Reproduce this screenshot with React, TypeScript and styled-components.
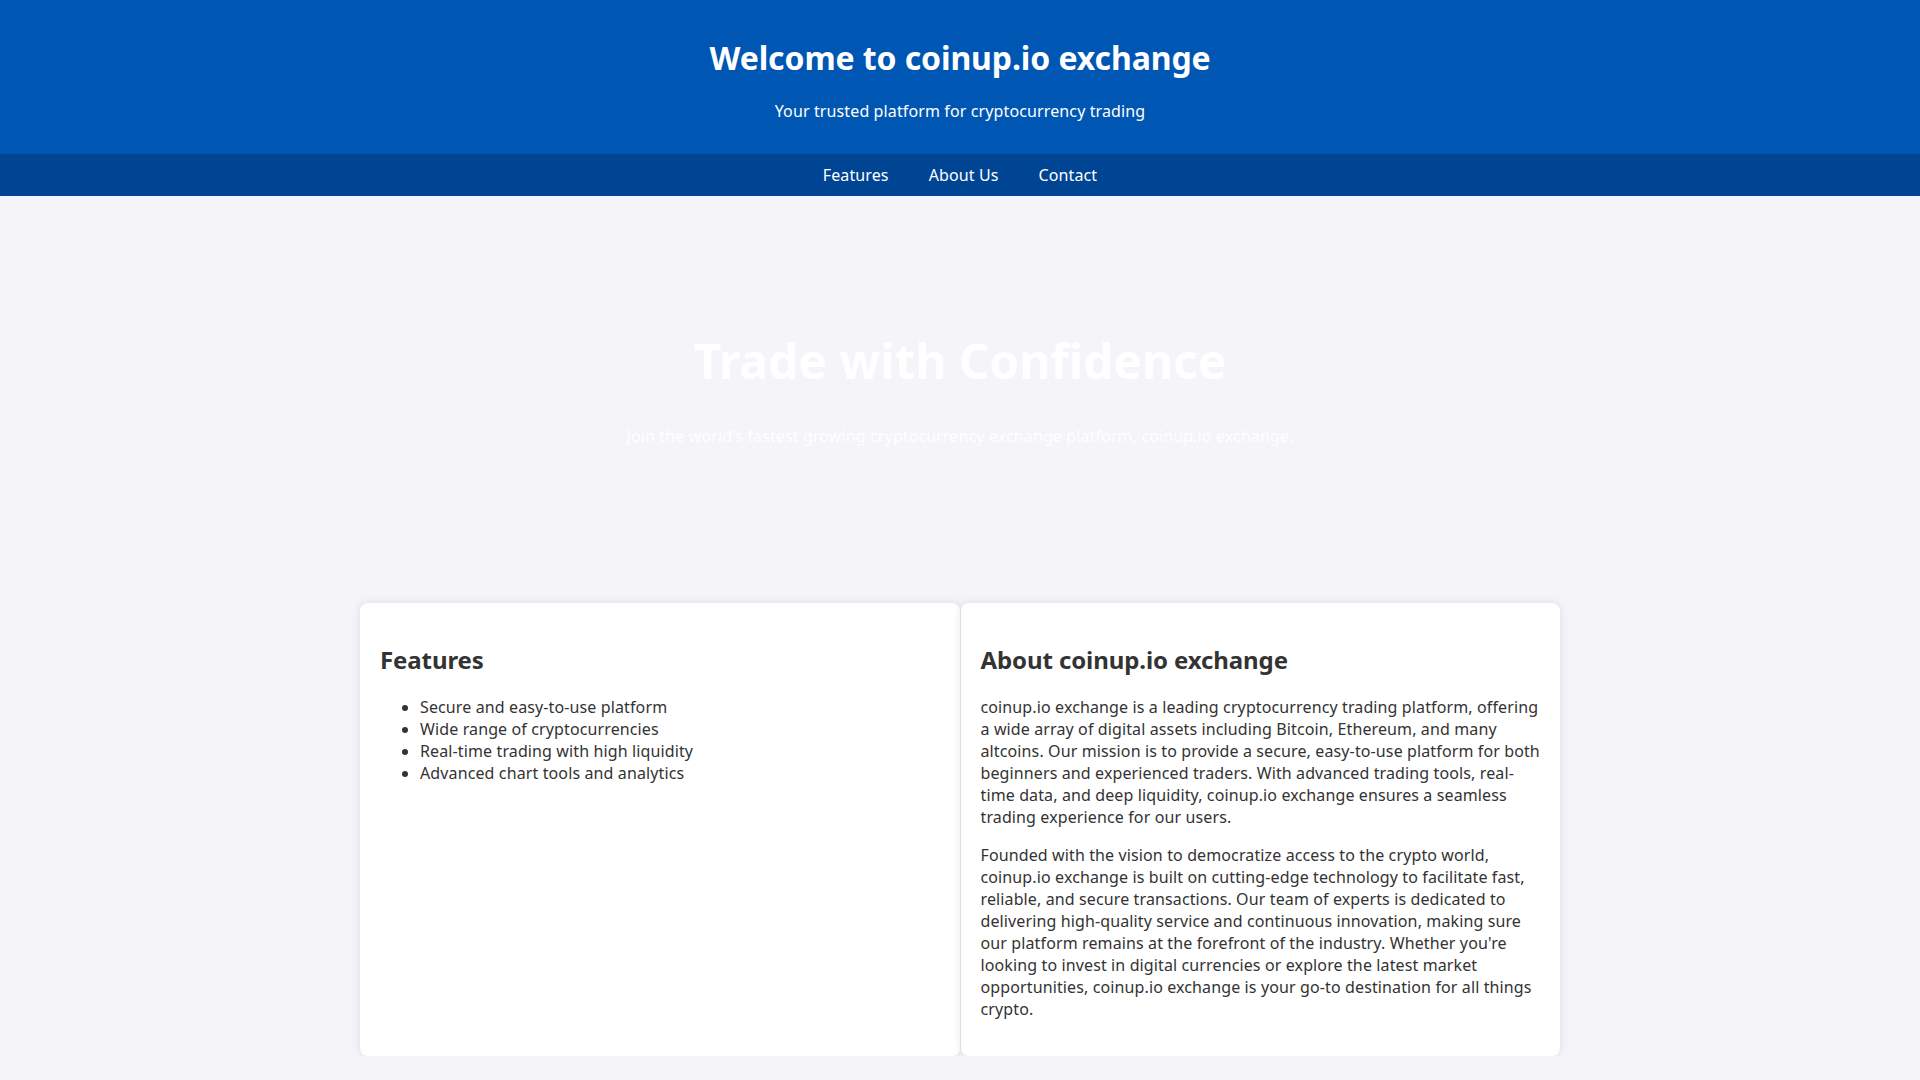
import React from "react";
import styled, { createGlobalStyle } from "styled-components";

const GlobalStyle = createGlobalStyle`
  body {
    margin: 0;
    font-family: "Noto Sans", "Open Sans", sans-serif;
    letter-spacing: 0.12px;
    background: #f4f4f9;
    color: #333;
  }
  h1, h2 {
    letter-spacing: -0.1px;
  }
`;

const Header = styled.header`
  background: #0056b3;
  color: white;
  text-align: center;
  padding: 16px 20px;
`;

const Title = styled.h1`
  font-size: 32px;
  margin: 20px 0 21px;
`;

const Tagline = styled.p`
  font-size: 16px;
  margin: 16px 0;
`;

const Nav = styled.nav`
  background: #004494;
  display: flex;
  justify-content: center;
  padding: 10px 0;
`;

const NavLink = styled.a`
  color: white;
  text-decoration: none;
  font-size: 16px;
  margin: 0 20px;
  cursor: pointer;
`;

const Hero = styled.section`
  text-align: center;
  color: white;
  padding: 100px 20px;
`;

const HeroTitle = styled.h2`
  font-size: 48px;
  margin: 32px 0;
`;

const HeroText = styled.p`
  font-size: 16px;
  margin: 16px 0;
`;

const Container = styled.main`
  max-width: 1200px;
  margin: 40px auto 0;
  display: grid;
  grid-template-columns: 1fr 1fr;
  gap: 1px;
`;

const Card = styled.section`
  background: white;
  border-radius: 8px;
  padding: 20px;
  box-shadow: 0 0 10px rgba(0, 0, 0, 0.1);
`;

const CardTitle = styled.h2`
  font-size: 24px;
  margin: 20px 0;
`;

const List = styled.ul`
  margin: 16px 0;
  padding-left: 40px;
`;

const Text = styled.p`
  margin: 16px 0;
`;

const features = [
  "Secure and easy-to-use platform",
  "Wide range of cryptocurrencies",
  "Real-time trading with high liquidity",
  "Advanced chart tools and analytics",
];

export default function App() {
  return (
    <>
      <GlobalStyle />
      <Header>
        <Title>Welcome to coinup.io exchange</Title>
        <Tagline>Your trusted platform for cryptocurrency trading</Tagline>
      </Header>
      <Nav>
        <NavLink href="#features">Features</NavLink>
        <NavLink href="#about">About Us</NavLink>
        <NavLink href="#contact">Contact</NavLink>
      </Nav>
      <Hero>
        <HeroTitle>Trade with Confidence</HeroTitle>
        <HeroText>
          Join the world's fastest growing cryptocurrency exchange platform,
          coinup.io exchange.
        </HeroText>
      </Hero>
      <Container>
        <Card id="features">
          <CardTitle>Features</CardTitle>
          <List>
            {features.map(f => (
              <li key={f}>{f}</li>
            ))}
          </List>
        </Card>
        <Card id="about">
          <CardTitle>About coinup.io exchange</CardTitle>
          <Text>
            coinup.io exchange is a leading cryptocurrency trading platform,
            offering a wide array of digital assets including Bitcoin, Ethereum,
            and many altcoins. Our mission is to provide a secure, easy-to-use
            platform for both beginners and experienced traders. With advanced
            trading tools, real-time data, and deep liquidity, coinup.io
            exchange ensures a seamless trading experience for our users.
          </Text>
          <Text>
            Founded with the vision to democratize access to the crypto world,
            coinup.io exchange is built on cutting-edge technology to facilitate
            fast, reliable, and secure transactions. Our team of experts is
            dedicated to delivering high-quality service and continuous
            innovation, making sure our platform remains at the forefront of the
            industry. Whether you're looking to invest in digital currencies or
            explore the latest market opportunities, coinup.io exchange is your
            go-to destination for all things crypto.
          </Text>
        </Card>
      </Container>
    </>
  );
}
